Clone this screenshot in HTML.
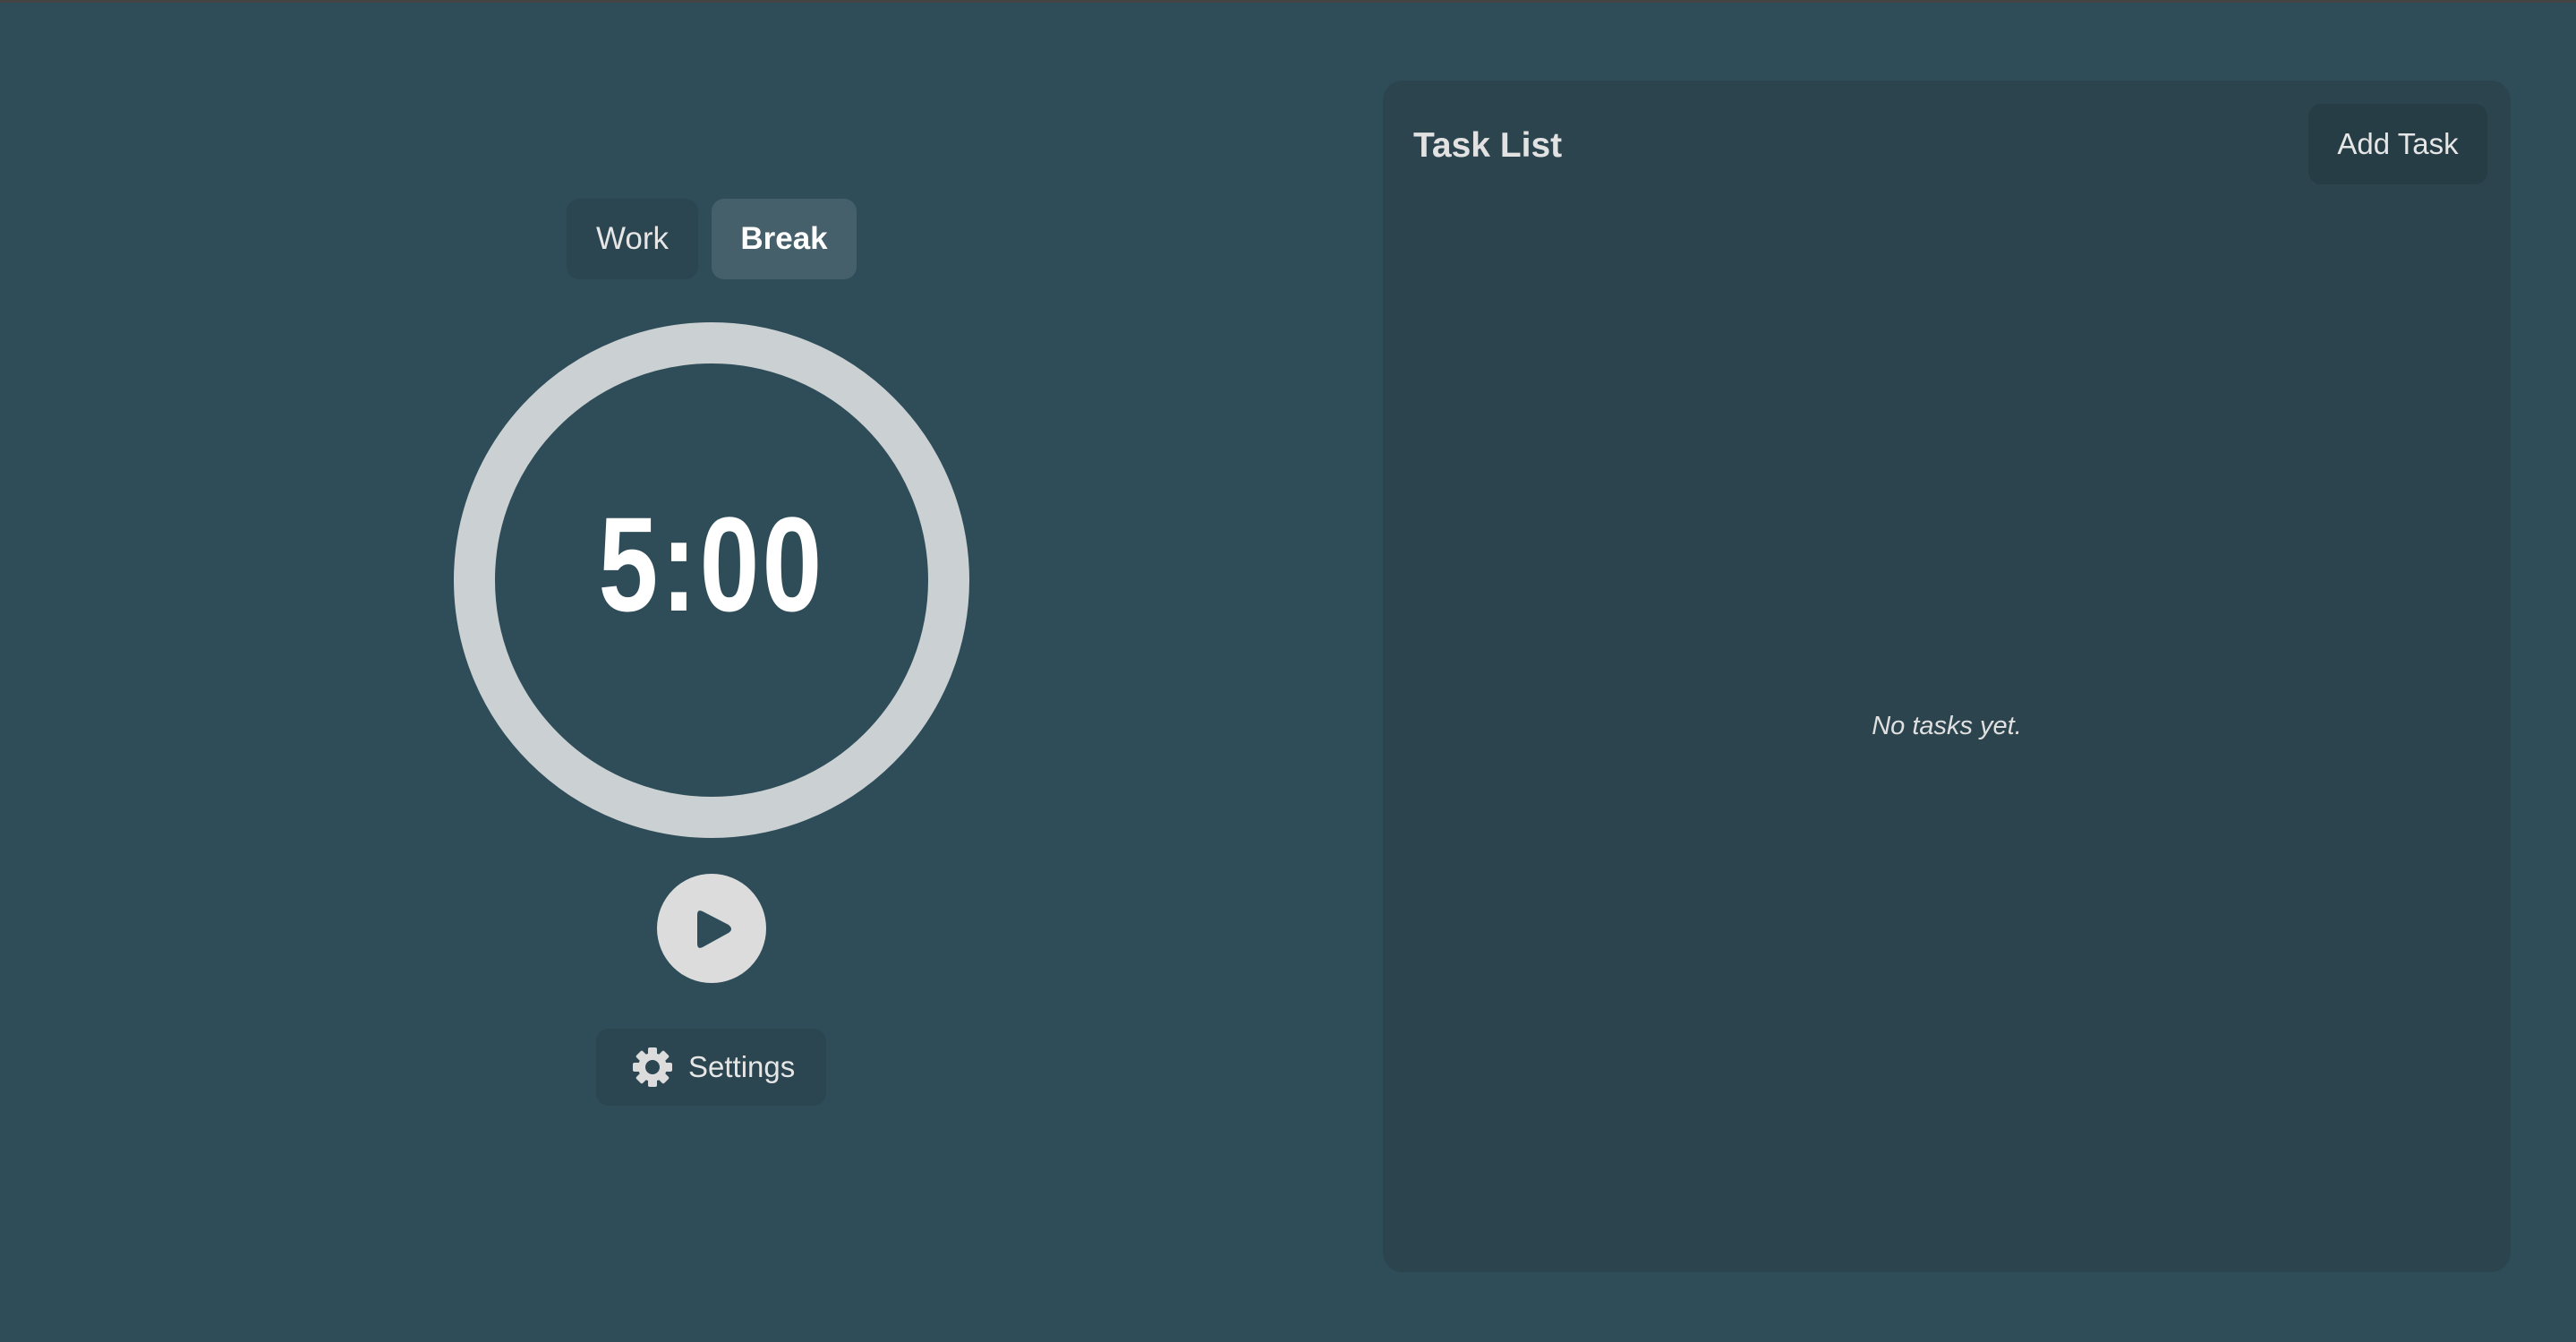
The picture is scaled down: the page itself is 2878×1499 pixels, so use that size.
<!DOCTYPE html>
<html><head><meta charset="utf-8"><style>
*{margin:0;padding:0;box-sizing:border-box}
html,body{width:2878px;height:1499px;overflow:hidden;background:#2f4d58;font-family:"Liberation Sans",sans-serif;position:relative}
.top{position:absolute;left:0;top:0;width:100%;height:3px;background:#444}
.btn{position:absolute;border-radius:14px;display:flex;align-items:center;justify-content:center;color:#e6e6e6}
.ring{position:absolute;left:507px;top:360px;width:576px;height:576px;border-radius:50%;border:46px solid #cbd0d3}
.time{position:absolute;left:545px;width:500px;top:540px;text-align:center;font-size:150px;font-weight:bold;color:#fff;line-height:180px;transform:scaleX(.8);letter-spacing:4px}
.play{position:absolute;left:734px;top:976px;width:122px;height:122px;border-radius:50%;background:#dcdcdc}
.panel{position:absolute;left:1545px;top:90px;width:1260px;height:1331px;border-radius:22px;background:#2c444e}
</style></head><body>
<div class="top"></div>
<div class="btn" style="left:633px;top:222px;width:147px;height:90px;background:#2b4651;font-size:35px">Work</div>
<div class="btn" style="left:795px;top:222px;width:162px;height:90px;background:#45606a;font-size:35px;font-weight:bold;color:#fff">Break</div>
<div class="ring"></div>
<div class="time">5:00</div>
<div class="play"><svg width="122" height="122" viewBox="0 0 122 122"><path d="M45 46 Q45 39 51 42 L80 57 Q86 62 80 66 L51 82 Q45 85 45 78 Z" fill="#2f4d58"/></svg></div>
<div class="btn" style="left:666px;top:1149px;width:257px;height:86px;background:#2b4651;font-size:33px;justify-content:flex-start;padding-left:40px">
<svg width="46" height="46" viewBox="-23 -23 46 46" style="margin-right:17px"><g fill="#dcdcdc"><circle r="16"/><g id="t"><rect x="-5" y="-22" width="10" height="10" rx="2"/></g><use href="#t" transform="rotate(45)"/><use href="#t" transform="rotate(90)"/><use href="#t" transform="rotate(135)"/><use href="#t" transform="rotate(180)"/><use href="#t" transform="rotate(225)"/><use href="#t" transform="rotate(270)"/><use href="#t" transform="rotate(315)"/></g><circle r="8" fill="#2b4651"/></svg>Settings</div>
<div class="panel">
<div style="position:absolute;left:34px;top:51px;font-size:39px;font-weight:bold;color:#e2e2e2">Task List</div>
<div class="btn" style="left:1034px;top:26px;width:200px;height:90px;background:#263d45;font-size:33px">Add Task</div>
<div style="position:absolute;left:0;width:100%;top:705px;text-align:center;font-size:29px;font-style:italic;color:#e0e0e0">No tasks yet.</div>
</div>
</body></html>
